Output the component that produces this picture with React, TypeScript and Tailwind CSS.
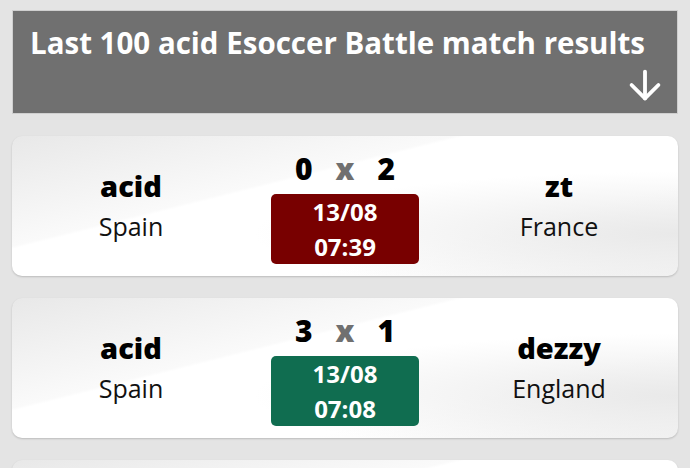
import { ArrowDown } from 'lucide-react';

type Match = {
  home: string;
  homeCountry: string;
  away: string;
  awayCountry: string;
  homeGoals: number;
  awayGoals: number;
  date: string;
  time: string;
  win: boolean;
};

const matches: Match[] = [
  { home: 'acid', homeCountry: 'Spain', away: 'zt', awayCountry: 'France', homeGoals: 0, awayGoals: 2, date: '13/08', time: '07:39', win: false },
  { home: 'acid', homeCountry: 'Spain', away: 'dezzy', awayCountry: 'England', homeGoals: 3, awayGoals: 1, date: '13/08', time: '07:08', win: true },
  { home: 'acid', homeCountry: 'Spain', away: 'zt', awayCountry: 'France', homeGoals: 1, awayGoals: 1, date: '13/08', time: '06:41', win: true },
];

function Team({ name, country }: { name: string; country: string }) {
  return (
    <div className="flex flex-col items-center">
      <span className="text-[29px] font-extrabold leading-[40px] text-black">{name}</span>
      <span className="text-[25px] leading-[40px] text-[#111]">{country}</span>
    </div>
  );
}

function MatchCard({ m }: { m: Match }) {
  return (
    <div className="grid h-[140px] grid-cols-[238px_1fr_238px] items-center rounded-[10px] bg-white bg-[radial-gradient(ellipse_at_100%_70%,#e9e9e9_0%,rgba(255,255,255,0)_45%),linear-gradient(166deg,#e8e8e8_0%,#fafafa_36%,#ffffff_37%,#ffffff_70%,#f4f4f4_100%)] shadow-[0_1px_2px_rgba(0,0,0,0.18)]">
      <Team name={m.home} country={m.homeCountry} />
      <div className="flex flex-col items-center">
        <div className="flex items-center gap-[23px] text-[30px] font-extrabold leading-[40px] text-black">
          <span>{m.homeGoals}</span>
          <span className="text-[#707070]">x</span>
          <span>{m.awayGoals}</span>
        </div>
        <div
          className={`mt-[5px] flex w-[148px] flex-col items-center rounded-[5px] text-[24px] font-bold leading-[35px] text-white ${
            m.win ? 'bg-[#106d50]' : 'bg-[#780000]'
          }`}
        >
          <span>{m.date}</span>
          <span>{m.time}</span>
        </div>
      </div>
      <Team name={m.away} country={m.awayCountry} />
    </div>
  );
}

export default function App() {
  return (
    <main className="h-screen overflow-hidden bg-[#e4e4e4] px-3 pt-[10px] font-['Open_Sans','Noto_Sans',sans-serif]">
      <div className="h-[104px] border border-[#cfcfcf] bg-[#707070] pl-[17px] pr-[9px] pt-[14px]">
        <h1 className="whitespace-nowrap text-[29.5px] font-bold leading-[36px] text-white">
          Last 100 acid Esoccer Battle match results
        </h1>
        <div className="mt-[1px] flex justify-end">
          <ArrowDown size={46} strokeWidth={2} color="#ffffff" />
        </div>
      </div>
      <div className="mt-[22px] flex flex-col gap-[22px]">
        {matches.map((m, i) => (
          <MatchCard key={i} m={m} />
        ))}
      </div>
    </main>
  );
}
